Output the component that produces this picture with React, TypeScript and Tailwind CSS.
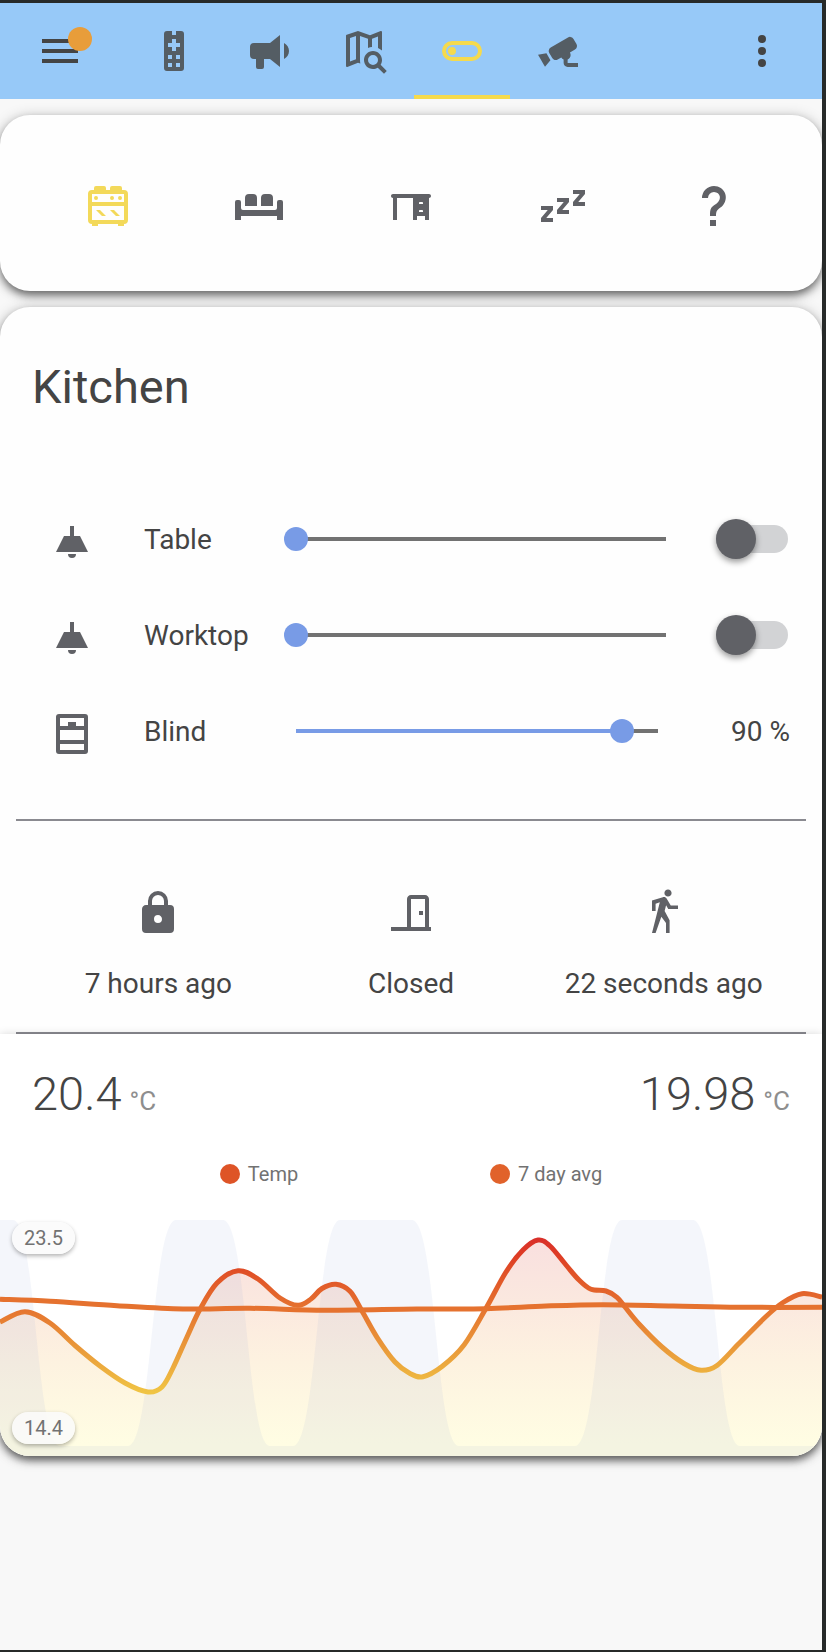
import { useId, useState, type CSSProperties } from "react";

const icons = {
  menu: "M3,6H21V8H3V6M3,11H21V13H3V11M3,16H21V18H3V16Z",
  remote:
    "M8.5,2H11V4H13V2H15.5A1.5,1.5 0 0,1 17,3.5V20.5A1.5,1.5 0 0,1 15.5,22H8.5A1.5,1.5 0 0,1 7,20.5V3.5A1.5,1.5 0 0,1 8.5,2M11,6V8H9V10H11V12H13V10H15V8H13V6H11M9,14V16H11V14H9M13,14V16H15V14H13M9,18V20H11V18H9M13,18V20H15V18H13Z",
  bullhorn:
    "M12,8H4A2,2 0 0,0 2,10V14A2,2 0 0,0 4,16H5V20A1,1 0 0,0 6,21H8A1,1 0 0,0 9,20V16H12L17,20V4L12,8M19,8V16C20.54,15.26 21.5,13.71 21.5,12C21.5,10.3 20.53,8.75 19,8Z",
  mapSearch:
    "M15.5,12C18,12 20,14 20,16.5C20,17.38 19.75,18.21 19.31,18.9L22.39,22L21,23.39L17.88,20.32C17.19,20.75 16.37,21 15.5,21C13,21 11,19 11,16.5C11,14 13,12 15.5,12M15.5,14A2.5,2.5 0 0,0 13,16.5A2.5,2.5 0 0,0 15.5,19A2.5,2.5 0 0,0 18,16.5A2.5,2.5 0 0,0 15.5,14M19.5,2L19.34,2.03L14,4.1L8,2L2.36,3.9C2.15,3.97 2,4.15 2,4.38V19.5A0.5,0.5 0 0,0 2.5,20L2.66,19.97L8,17.9L9.15,18.3C9.03,17.6 9,16.9 9,16.2V4.45L13,5.85V10.5C13.62,10.24 14.3,10.09 15,10.03V5.87L18,4.71V10.5C18.75,10.81 19.42,11.26 20,11.81V2.5A0.5,0.5 0 0,0 19.5,2M4,5.46L7,4.45V16.15L4,17.31V5.46Z",
  toggle:
    "M7,10A2,2 0 0,1 9,12A2,2 0 0,1 7,14A2,2 0 0,1 5,12A2,2 0 0,1 7,10M17,7A5,5 0 0,1 22,12A5,5 0 0,1 17,17H7A5,5 0 0,1 2,12A5,5 0 0,1 7,7H17M7,9A3,3 0 0,0 4,12A3,3 0 0,0 7,15H17A3,3 0 0,0 20,12A3,3 0 0,0 17,9H7Z",
  cctv: "M18.15,4.94C17.77,4.91 17.37,5 17,5.2L8.35,10.2C7.39,10.76 7.07,12 7.62,12.94L9.12,15.53C9.67,16.5 10.89,16.82 11.85,16.27L13.65,15.23C13.92,15.69 14.32,16.06 14.81,16.27V18.04C14.81,19.13 15.7,20 16.81,20H22V18.04H16.81V16.27C17.72,15.87 18.31,14.97 18.31,14C18.31,13.54 18.19,13.11 17.97,12.73L20.5,11.27C21.47,10.71 21.8,9.5 21.24,8.53L19.74,5.94C19.4,5.34 18.79,5 18.15,4.94M6.22,13.17L2,13.87L2.75,15.17L4.75,18.63L5.5,19.93L8.22,16.63L6.22,13.17Z",
  dots: "M12,16A2,2 0 0,1 14,18A2,2 0 0,1 12,20A2,2 0 0,1 10,18A2,2 0 0,1 12,16M12,10A2,2 0 0,1 14,12A2,2 0 0,1 12,14A2,2 0 0,1 10,12A2,2 0 0,1 12,10M12,4A2,2 0 0,1 14,6A2,2 0 0,1 12,8A2,2 0 0,1 10,6A2,2 0 0,1 12,4Z",
  stove:
    "M6,14H8L11,17H9L6,14M4,4H5V3A1,1 0 0,1 6,2H10A1,1 0 0,1 11,3V4H13V3A1,1 0 0,1 14,2H18A1,1 0 0,1 19,3V4H20A2,2 0 0,1 22,6V19A2,2 0 0,1 20,21V22H17V21H7V22H4V21A2,2 0 0,1 2,19V6A2,2 0 0,1 4,4M18,7A1,1 0 0,1 19,8A1,1 0 0,1 18,9A1,1 0 0,1 17,8A1,1 0 0,1 18,7M14,7A1,1 0 0,1 15,8A1,1 0 0,1 14,9A1,1 0 0,1 13,8A1,1 0 0,1 14,7M20,6H4V10H20V6M4,12V19H20V12H4M6,7A1,1 0 0,1 7,8A1,1 0 0,1 6,9A1,1 0 0,1 5,8A1,1 0 0,1 6,7M13,14H15L18,17H16L13,14Z",
  sofa: "M7,6H9A2,2 0 0,1 11,8V12H5V8A2,2 0 0,1 7,6M15,6H17A2,2 0 0,1 19,8V12H13V8A2,2 0 0,1 15,6M1,9H2A1,1 0 0,1 3,10V13A1,1 0 0,0 4,14H20A1,1 0 0,0 21,13V10A1,1 0 0,1 22,9H23A1,1 0 0,1 24,10V19H21V17H3V19H0V10A1,1 0 0,1 1,9Z",
  desk: "M3 6H21C21.55 6 22 6.45 22 7C22 7.55 21.55 8 21 8V19H19V17H15V19H13V8H5V19H3V8C2.45 8 2 7.55 2 7C2 6.45 2.45 6 3 6M16 10.5V11H18V10.5C18 10.22 17.78 10 17.5 10H16.5C16.22 10 16 10.22 16 10.5M16 14.5V15H18V14.5C18 14.22 17.78 14 17.5 14H16.5C16.22 14 16 14.22 16 14.5Z",
  sleep:
    "M23,12H17V10L20.39,6H17V4H23V6L19.62,10H23V12M15,16H9V14L12.39,10H9V8H15V10L11.62,14H15V16M7,20H1V18L4.39,14H1V12H7V14L3.62,18H7V20Z",
  help: "M10,19H13V22H10V19M12,2C17.35,2.22 19.68,7.62 16.5,11.67C15.67,12.67 14.33,13.33 13.67,14.17C13,15 13,16 13,17H10C10,15.33 10,13.92 10.67,12.92C11.33,11.92 12.67,11.33 13.5,10.67C15.92,8.43 15.32,5.26 12,5A3,3 0 0,0 9,8H6A6,6 0 0,1 12,2Z",
  ceilingLight: "M8,9H11V4H13V9H16L20,17H4L8,9M14,18A2,2 0 0,1 12,20A2,2 0 0,1 10,18H14Z",
  blind:
    "M5.5,2H18.5A1.5,1.5 0 0,1 20,3.5V20.5A1.5,1.5 0 0,1 18.5,22H5.5A1.5,1.5 0 0,1 4,20.5V3.5A1.5,1.5 0 0,1 5.5,2M6,4V8H10V6H14V8H18V4H6M6,10V15H18V10H6M6,17V20H18V17H6Z",
  lock: "M12,17A2,2 0 0,0 14,15C14,13.89 13.1,13 12,13A2,2 0 0,0 10,15A2,2 0 0,0 12,17M18,8A2,2 0 0,1 20,10V20A2,2 0 0,1 18,22H6A2,2 0 0,1 4,20V10C4,8.89 4.9,8 6,8H7V6A5,5 0 0,1 12,1A5,5 0 0,1 17,6V8H18M12,3A3,3 0 0,0 9,6V8H15V6A3,3 0 0,0 12,3Z",
  door: "M16,11H18V13H16V11M12,3H19C20.11,3 21,3.89 21,5V19H22V21H2V19H10V5C10,3.89 10.89,3 12,3M12,5V19H19V5H12Z",
  walk: "M14.12,10H19V8.2H15.38L13.38,4.87C13.08,4.37 12.54,4.03 11.92,4.03C11.74,4.03 11.58,4.06 11.42,4.11L6,5.8V11H7.8V7.33L9.91,6.67L6,22H7.8L10.67,13.89L13,17V22H14.8V15.59L12.31,11.05L13.04,8.18M14,3.8C15,3.8 15.8,3 15.8,2C15.8,1 15,0.2 14,0.2C13,0.2 12.2,1 12.2,2C12.2,3 13,3.8 14,3.8Z",
};

type IconName = keyof typeof icons;

function Icon({ name }: { name: IconName }) {
  return (
    <svg viewBox="0 0 24 24" className="block size-12 shrink-0" fill="currentColor" fillRule="evenodd" aria-hidden="true">
      <path d={icons[name]} />
    </svg>
  );
}

const tabs: { icon: IconName; label: string }[] = [
  { icon: "remote", label: "Remote" },
  { icon: "bullhorn", label: "Announcements" },
  { icon: "mapSearch", label: "Map" },
  { icon: "toggle", label: "Controls" },
  { icon: "cctv", label: "Cameras" },
];

function Header() {
  return (
    <header className="flex h-24 items-stretch bg-[#97c9f8] px-3 text-[#444444]">
      <button type="button" aria-label="Menu" className="relative flex w-24 items-center justify-center">
        <Icon name="menu" />
        <span className="absolute top-6 right-4 size-6 rounded-full bg-[#e89d3a]" />
      </button>
      <nav className="ml-[18px] flex flex-1">
        {tabs.map((tab) => (
          <a
            key={tab.icon}
            href={"#" + tab.icon}
            aria-label={tab.label}
            className={
              tab.icon === "toggle"
                ? "flex w-24 items-center justify-center border-y-4 border-t-transparent border-b-[#f5da4d] text-[#f5da4d]"
                : "flex w-24 items-center justify-center text-[#545d64]"
            }
          >
            <Icon name={tab.icon} />
          </a>
        ))}
      </nav>
      <button type="button" aria-label="More options" className="flex w-24 items-center justify-center">
        <Icon name="dots" />
      </button>
    </header>
  );
}

const rooms: { icon: IconName; label: string }[] = [
  { icon: "stove", label: "Kitchen" },
  { icon: "sofa", label: "Living room" },
  { icon: "desk", label: "Office" },
  { icon: "sleep", label: "Bedroom" },
  { icon: "help", label: "Other" },
];

const cardClass =
  "rounded-[30px] bg-[#fefefe] shadow-[0_5px_8px_-1px_rgba(0,0,0,0.5),0_2px_14px_0_rgba(0,0,0,0.25)]";

function RoomPicker() {
  return (
    <section className={cardClass}>
      <div className="grid grid-cols-5 px-8 pt-[67px] pb-[61px]">
        {rooms.map((room) => (
          <button
            key={room.icon}
            type="button"
            aria-label={room.label}
            className={
              room.icon === "stove"
                ? "flex justify-center text-[#f3d95a]"
                : "flex justify-center text-[#606166]"
            }
          >
            <Icon name={room.icon} />
          </button>
        ))}
      </div>
    </section>
  );
}

function Slider({ id, value, onChange }: { id: string; value: number; onChange: (v: number) => void }) {
  return (
    <input
      id={id}
      type="range"
      min={0}
      max={100}
      value={value}
      onChange={(e) => onChange(Number(e.target.value))}
      style={{ "--fill": value + "%" } as CSSProperties}
      className="h-6 min-w-0 flex-1 appearance-none bg-[linear-gradient(to_right,#789be6_var(--fill),#727272_var(--fill))] bg-[length:calc(100%-24px)_4px] bg-center bg-no-repeat [&::-webkit-slider-thumb]:size-6 [&::-webkit-slider-thumb]:appearance-none [&::-webkit-slider-thumb]:rounded-full [&::-webkit-slider-thumb]:bg-[#789be6]"
    />
  );
}

function Row({ icon, label, initial, cover }: { icon: IconName; label: string; initial: number; cover?: boolean }) {
  const id = useId();
  const [value, setValue] = useState(initial);
  const [on, setOn] = useState(false);
  return (
    <div className="flex h-24 items-center px-8">
      <span className="flex w-20 justify-center pt-1.5 text-[#606166]">
        <Icon name={icon} />
      </span>
      <label htmlFor={id} className="ml-8 w-[140px] pt-0.5 text-[28px] leading-10 text-[#444444]">
        {label}
      </label>
      <Slider id={id} value={value} onChange={setValue} />
      {cover ? (
        <span className="w-[120px] pt-0.5 text-right text-[28px] leading-10 text-[#444444]">{value} %</span>
      ) : (
        <span className="flex w-28 justify-end pr-0.5">
          <input
            type="checkbox"
            role="switch"
            aria-label={label + " light"}
            checked={on}
            onChange={() => setOn(!on)}
            className="relative h-7 w-[72px] appearance-none rounded-full bg-[#d2d3d5] before:absolute before:-top-1.5 before:left-0 before:size-10 before:rounded-full before:bg-[#606166] before:shadow-[0_3px_6px_rgba(0,0,0,0.4)] checked:before:left-8"
          />
        </span>
      )}
    </div>
  );
}

const sensors: { icon: IconName; text: string }[] = [
  { icon: "lock", text: "7 hours ago" },
  { icon: "door", text: "Closed" },
  { icon: "walk", text: "22 seconds ago" },
];

type Point = [number, number];

const temperature: Point[] = [
  [0, 102], [25, 91.7], [50, 103], [75, 125.5], [100, 146], [125, 163], [148, 172], [162, 167], [173, 148],
  [187, 117], [200, 89.3], [217, 63], [238, 50.7], [258, 59], [280, 78], [298, 85.3], [311, 79], [322, 68.5],
  [336, 64.3], [350, 71.3], [362, 91], [377, 117.3], [395, 142], [410, 153.5], [423, 156.7], [442, 146.5],
  [464, 125], [486, 88.3], [506, 52], [523, 30], [538, 20], [550, 26], [566, 45], [579, 60], [591, 69.3],
  [606, 71], [617, 77.3], [625, 87], [639, 104], [662, 127], [684, 143.5], [701, 150.3], [717, 145.5],
  [739, 123.5], [766, 96.5], [783, 82.5], [802, 73.7], [822, 77],
];

const average: Point[] = [
  [0, 79.3], [50, 81.3], [117, 85.7], [183, 89], [250, 88.3], [325, 90.3], [417, 89], [486, 88.7], [546, 86],
  [603, 84.7], [673, 86], [739, 87.3], [822, 87.3],
];

// Catmull-Rom spline through the points, written as cubic Béziers.
function smooth(points: Point[]) {
  let d = "M" + points[0].join(",");
  for (let i = 0; i < points.length - 1; i++) {
    const p0 = points[i - 1] ?? points[i];
    const p1 = points[i];
    const p2 = points[i + 1];
    const p3 = points[i + 2] ?? p2;
    d += `C${p1[0] + (p2[0] - p0[0]) / 6},${p1[1] + (p2[1] - p0[1]) / 6} ${p2[0] - (p3[0] - p1[0]) / 6},${p2[1] - (p3[1] - p1[1]) / 6} ${p2[0]},${p2[1]}`;
  }
  return d;
}

const nights =
  "M0,0H13C36,0 36,226 60,226H128C152,226 152,0 176,0H223C247,0 247,226 270,226H293C317,226 317,0 340,0H412C436,0 436,226 459,226H575C599,226 599,0 622,0H693C717,0 717,226 740,226H822V236H0Z";

function Chart() {
  const line = smooth(temperature);
  return (
    <div className="relative">
      <svg viewBox="0 0 822 236" preserveAspectRatio="none" className="block h-[236px] w-full" role="img" aria-label="Temperature history">
        <defs>
          <linearGradient id="stroke" gradientUnits="userSpaceOnUse" x1="0" y1="0" x2="0" y2="236">
            <stop offset="0.08" stopColor="#d9302a" />
            <stop offset="0.15" stopColor="#de3c25" />
            <stop offset="0.22" stopColor="#e05027" />
            <stop offset="0.37" stopColor="#e5722f" />
            <stop offset="0.53" stopColor="#e99639" />
            <stop offset="0.73" stopColor="#f0c444" />
          </linearGradient>
          <linearGradient id="area" gradientUnits="userSpaceOnUse" x1="0" y1="0" x2="0" y2="236">
            <stop offset="0.1" stopColor="#f9e0df" />
            <stop offset="0.37" stopColor="#fbe9df" />
            <stop offset="0.6" stopColor="#fdf2e0" />
            <stop offset="0.95" stopColor="#fffde3" />
          </linearGradient>
        </defs>
        <path d={line + "V236H0Z"} fill="url(#area)" />
        <path d={nights} fill="#91a5d7" fillOpacity="0.1" />
        <path d={smooth(average)} fill="none" stroke="#e5722f" strokeWidth="5" vectorEffect="non-scaling-stroke" />
        <path d={line} fill="none" stroke="url(#stroke)" strokeWidth="5" vectorEffect="non-scaling-stroke" />
      </svg>
      <Bound className="absolute top-0.5 left-3" text="23.5" />
      <Bound className="absolute bottom-3 left-3" text="14.4" />
    </div>
  );
}

function Bound({ className, text }: { className: string; text: string }) {
  return (
    <span className={className + " rounded-full bg-[#fafafa]/85 px-3 text-[20px] leading-8 text-[#727272] shadow-[0_2px_4px_rgba(0,0,0,0.3)]"}>
      {text}
    </span>
  );
}

function Reading({ value }: { value: string }) {
  return (
    <p className="flex items-baseline gap-2 text-[47px] leading-14 font-light text-[#444444]">
      {value}
      <span className="text-[26px] leading-8 font-normal text-[#8e8e8e]">°C</span>
    </p>
  );
}

function KitchenCard() {
  return (
    <section className={"mt-4 " + cardClass}>
      <h1 className="px-8 pt-12 pb-[72px] text-[47px] leading-16 text-[#444444]">Kitchen</h1>
      <Row icon="ceilingLight" label="Table" initial={0} />
      <Row icon="ceilingLight" label="Worktop" initial={0} />
      <Row icon="blind" label="Blind" initial={90} cover />
      <hr className="mx-4 mt-10 border-t-2 border-[#8a8a90]" />
      <ul className="grid grid-cols-3 px-8 pt-[68px] pb-7">
        {sensors.map((s) => (
          <li key={s.icon} className="flex flex-col items-center gap-[27px] text-[#606166]">
            <Icon name={s.icon} />
            <span className="text-[28px] leading-10 text-[#444444]">{s.text}</span>
          </li>
        ))}
      </ul>
      <hr className="mx-4 border-t-2 border-[#8a8a90]" />
      <div className="overflow-hidden rounded-b-[30px] bg-white shadow-[0_1px_10px_rgba(0,0,0,0.18)]">
        <div className="flex justify-between px-8 pt-8">
          <Reading value="20.4" />
          <Reading value="19.98" />
        </div>
        <div className="flex justify-evenly px-7 pt-9 pb-[30px] text-[20px] leading-8 text-[#727272]">
          <span className="flex items-center gap-2">
            <span className="size-5 rounded-full bg-[#de5427]" />
            Temp
          </span>
          <span className="flex items-center gap-2">
            <span className="size-5 rounded-full bg-[#e1622b]" />7 day avg
          </span>
        </div>
        <Chart />
      </div>
    </section>
  );
}

export default function App() {
  return (
    <div className="flex min-h-screen bg-[#272a29] pt-[3px] pr-1 pb-0.5 font-[Roboto,'Liberation_Sans',sans-serif]">
      <div className="min-w-0 flex-1 overflow-hidden bg-[#f8f8f8]">
        <Header />
        <main className="pt-4">
          <RoomPicker />
          <KitchenCard />
        </main>
      </div>
    </div>
  );
}
